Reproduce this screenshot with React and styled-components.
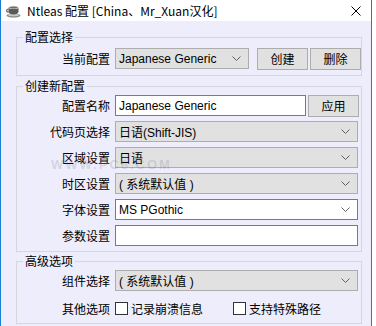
import React from "react";
import styled, { createGlobalStyle } from "styled-components";

const GlobalStyle = createGlobalStyle`
  html, body {
    margin: 0;
    padding: 0;
    background: #ffffff;
  }
  body {
    font-family: "Noto Sans CJK SC", "Liberation Sans", sans-serif;
    font-size: 12px;
    color: #000;
  }
`;

const cjk = `"Noto Sans CJK SC", "Liberation Sans", sans-serif`;
const latin = `"Liberation Sans", "Noto Sans CJK SC", sans-serif`;

const CupIcon = () => (
  <svg width="16" height="14" viewBox="0 0 16 14">
    <ellipse cx="8.5" cy="11.5" rx="7" ry="2" fill="#8a8a8a" />
    <ellipse cx="8.5" cy="11" rx="5.5" ry="1.2" fill="#c8c8c8" />
    <path d="M3.5 3.5 h10 v4 c0 2 -2 3 -5 3 c-3 0 -5 -1 -5 -3 z" fill="#5a5a5a" />
    <ellipse cx="8.5" cy="3.5" rx="5" ry="1.5" fill="#d8d8d8" />
    <ellipse cx="8.5" cy="3.6" rx="4" ry="1" fill="#7a6a5a" />
    <path d="M3.6 5 c-2.5 0 -2.8 3 0 3.2" fill="none" stroke="#5a5a5a" strokeWidth="1.2" />
  </svg>
);

const CloseIcon = () => (
  <svg width="10" height="10" viewBox="0 0 10 10">
    <path d="M0.5 0.5 L9.5 9.5 M9.5 0.5 L0.5 9.5" stroke="#000" strokeWidth="1" />
  </svg>
);

const Chevron = () => (
  <svg width="9" height="5" viewBox="0 0 9 5">
    <path d="M0.5 0.5 L4.5 4.5 L8.5 0.5" fill="none" stroke="#606060" strokeWidth="1" />
  </svg>
);

const DEFAULT_VALUE = "( 系统默认值 )";

export default function App() {
  return (
    <>
      <GlobalStyle />
      <Window>
        <TitleBar>
          <TitleIcon><CupIcon /></TitleIcon>
          <TitleText>Ntleas 配置 [China、Mr_Xuan汉化]</TitleText>
          <CloseButton><CloseIcon /></CloseButton>
        </TitleBar>

        <Body>
          <Group $gap={0} $pt={3} $pb={6} $mt={8}>
            <Legend>配置选择</Legend>
            <Row>
              <Label>当前配置</Label>
              <Line>
                <Combo $width={134}>
                  <span>Japanese Generic</span>
                  <Chevron />
                </Combo>
                <Button $width={51} $ml={6}>创建</Button>
                <Button $width={51}>删除</Button>
              </Line>
            </Row>
          </Group>

          <Group $gap={5} $pt={1} $pb={5} $mt={2}>
            <Legend>创建新配置</Legend>
            <Row>
              <Label>配置名称</Label>
              <Line>
                <TextBox $width={191}>Japanese Generic</TextBox>
                <Button $width={51}>应用</Button>
              </Line>
            </Row>
            <Row>
              <Label>代码页选择</Label>
              <Combo>
                <span>日语(Shift-JIS)</span>
                <Chevron />
              </Combo>
            </Row>
            <Row>
              <Label>区域设置</Label>
              <Combo>
                <span>日语</span>
                <Chevron />
              </Combo>
            </Row>
            <Row>
              <Label>时区设置</Label>
              <Combo>
                <span>{DEFAULT_VALUE}</span>
                <Chevron />
              </Combo>
            </Row>
            <Row>
              <Label>字体设置</Label>
              <Combo $white>
                <span>MS PGothic</span>
                <Chevron />
              </Combo>
            </Row>
            <Row>
              <Label>参数设置</Label>
              <TextBox />
            </Row>
            <Watermark>WWW.PC6.COM</Watermark>
          </Group>

          <Group $gap={7} $pt={1} $pb={4} $mt={1}>
            <Legend>高级选项</Legend>
            <Row>
              <Label>组件选择</Label>
              <Combo>
                <span>{DEFAULT_VALUE}</span>
                <Chevron />
              </Combo>
            </Row>
            <Row>
              <Label>其他选项</Label>
              <Line>
                <Check>
                  <Box />
                  <span>记录崩溃信息</span>
                </Check>
                <Check>
                  <Box />
                  <span>支持特殊路径</span>
                </Check>
              </Line>
            </Row>
          </Group>
        </Body>
      </Window>
    </>
  );
}

const Window = styled.div`
  width: 370px;
  height: 326px;
  border-left: 1px solid #1a7fd4;
  border-right: 1px solid #1a7fd4;
  display: flex;
  flex-direction: column;
  overflow: hidden;
`;

const TitleBar = styled.div`
  height: 21px;
  background: #ffffff;
  display: flex;
  align-items: center;
  flex-shrink: 0;
`;

const TitleIcon = styled.div`
  width: 16px;
  height: 14px;
  margin-left: 4px;
  display: flex;
`;

const TitleText = styled.div`
  margin-left: 6px;
  font-family: ${cjk};
  font-size: 12px;
  line-height: 16px;
  flex: 1;
`;

const CloseButton = styled.div`
  width: 10px;
  height: 10px;
  margin-right: 10px;
  margin-top: 1px;
  display: flex;
`;

const Body = styled.div`
  flex: 1;
  background: #ededfb;
  padding-left: 15px;
  display: flex;
  flex-direction: column;
`;

const Group = styled.fieldset`
  position: relative;
  width: 346px;
  box-sizing: border-box;
  margin: ${(p) => p.$mt}px 0 0 0;
  padding: ${(p) => p.$pt}px 3px ${(p) => p.$pb}px 0;
  border: 1px solid #d6d6de;
  display: flex;
  flex-direction: column;
  gap: ${(p) => p.$gap}px;
  min-width: 0;
`;

const Legend = styled.legend`
  margin-left: 6px;
  padding: 0 2px;
  font-family: ${cjk};
  font-size: 12px;
  line-height: 16px;
  height: 16px;
`;

const Row = styled.div`
  display: grid;
  grid-template-columns: 93px 1fr;
  column-gap: 5px;
  align-items: center;
  height: 21px;
`;

const Label = styled.div`
  text-align: right;
  font-family: ${cjk};
  font-size: 12px;
  line-height: 16px;
  white-space: nowrap;
`;

const Line = styled.div`
  display: flex;
  align-items: center;
  gap: 2px;
  height: 21px;
`;

const Combo = styled.div`
  box-sizing: border-box;
  height: 21px;
  width: ${(p) => (p.$width ? `${p.$width}px` : "auto")};
  background: ${(p) => (p.$white ? "#ffffff" : "#e1e1e1")};
  border: 1px solid ${(p) => (p.$white ? "#7a7a7a" : "#adadad")};
  display: flex;
  align-items: center;
  justify-content: space-between;
  padding: 0 7px 0 3px;
  font-family: ${latin};
  font-size: 12px;
  white-space: pre;
  overflow: hidden;

  svg {
    flex-shrink: 0;
  }
`;

const TextBox = styled.div`
  box-sizing: border-box;
  height: 21px;
  width: ${(p) => (p.$width ? `${p.$width}px` : "auto")};
  background: #ffffff;
  border: 1px solid #7a7a7a;
  display: flex;
  align-items: center;
  padding: 0 3px;
  font-family: ${latin};
  font-size: 12px;
  white-space: nowrap;
`;

const Button = styled.div`
  box-sizing: border-box;
  height: 22px;
  width: ${(p) => p.$width}px;
  margin-left: ${(p) => p.$ml || 0}px;
  background: #e1e1e1;
  border: 1px solid #adadad;
  display: flex;
  align-items: center;
  justify-content: center;
  font-family: ${cjk};
  font-size: 12px;
`;

const Check = styled.div`
  display: flex;
  align-items: center;
  gap: 3px;
  width: 116px;
  font-family: ${cjk};
  font-size: 12px;
  line-height: 16px;
`;

const Box = styled.span`
  box-sizing: border-box;
  width: 13px;
  height: 13px;
  background: #ffffff;
  border: 1px solid #333333;
  flex-shrink: 0;
`;

const Watermark = styled.div`
  position: absolute;
  left: 34px;
  top: 63px;
  font-family: ${latin};
  font-weight: bold;
  font-size: 13px;
  letter-spacing: 2px;
  color: rgba(120, 120, 140, 0.22);
  pointer-events: none;
`;
